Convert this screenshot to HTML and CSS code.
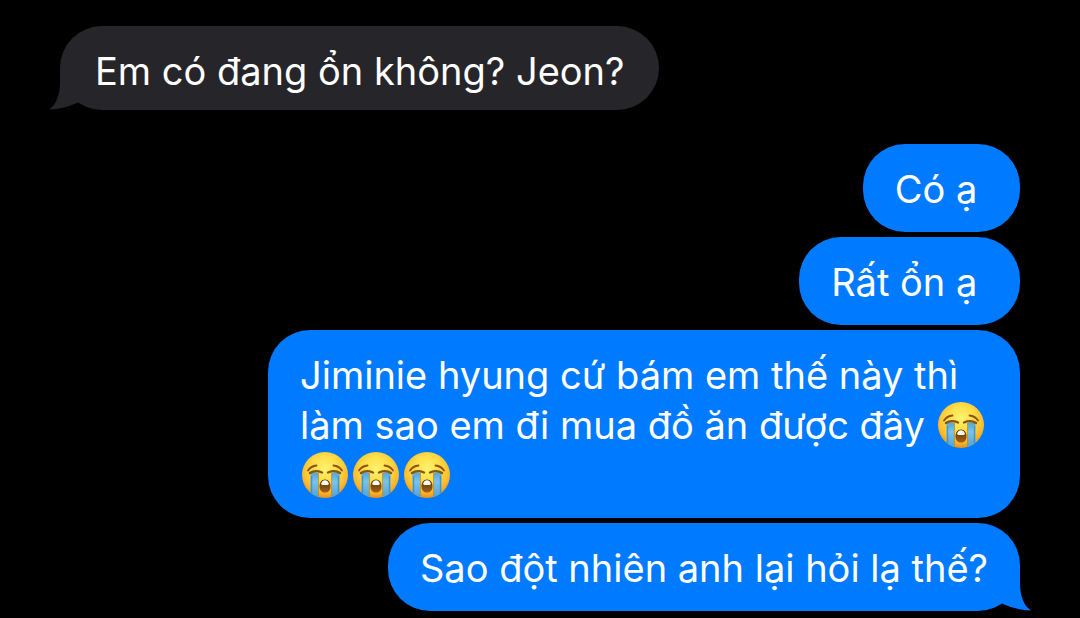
FILE: index.html
```html
<!DOCTYPE html>
<html lang="vi">
<head>
<meta charset="utf-8">
<meta name="viewport" content="width=device-width, initial-scale=1">
<title>Messages</title>
<link rel="stylesheet" href="styles.css">
</head>
<body>
<svg class="defs" aria-hidden="true">
  <defs>
    <radialGradient id="face" cx="50%" cy="36%" r="66%">
      <stop offset="0" stop-color="#fff36e"/>
      <stop offset="0.45" stop-color="#ffdc45"/>
      <stop offset="0.78" stop-color="#fbb82b"/>
      <stop offset="1" stop-color="#e08c1a"/>
    </radialGradient>
    <linearGradient id="tears" x1="0" y1="0" x2="0" y2="1">
      <stop offset="0" stop-color="#4fa6d8"/>
      <stop offset="0.35" stop-color="#7cc3e8"/>
      <stop offset="1" stop-color="#4a9fd3"/>
    </linearGradient>
    <linearGradient id="mouth" x1="0" y1="0" x2="0" y2="1">
      <stop offset="0" stop-color="#5c3208"/>
      <stop offset="1" stop-color="#a2611a"/>
    </linearGradient>
    <clipPath id="round"><circle cx="24" cy="24" r="23"/></clipPath>
    <symbol id="crying" viewBox="0 0 48 48">
      <circle cx="24" cy="24" r="23" fill="url(#face)"/>
      <g clip-path="url(#round)">
        <path d="M9.500 22Q14 20.500 17.500 22V48H9.500Z" fill="url(#tears)"/>
        <path d="M30.500 22Q34 20.500 38.500 22V48H30.500Z" fill="url(#tears)"/>
        <path d="M17.500 22V48M30.500 22V48" stroke="#c9851d" stroke-width="1" opacity="0.7"/>
        <path d="M10.500 25V48M37.500 25V48" stroke="#3583bd" stroke-width="1.500" opacity="0.7"/>
      </g>
      <g fill="none" stroke="#8b5210" stroke-linecap="round">
        <path d="M7 19.500Q10 15 15.500 14.500M41 19.500Q38 15 32.500 14.500" stroke-width="1.800"/>
        <path d="M9 22Q14 18.500 21 21.500M39 22Q34 18.500 27 21.500" stroke-width="2.400"/>
      </g>
      <path d="M24 28.500C27.500 28.500 29.500 31.500 29.500 35.500C29.500 39.500 27 41.500 24 41.500S18.500 39.500 18.500 35.500C18.500 31.500 20.500 28.500 24 28.500Z" fill="url(#mouth)"/>
      <path d="M20.300 32.300C21 30.300 22.300 29.300 24 29.300S27 30.300 27.700 32.300Q28 34 26.500 34H21.500Q20 34 20.300 32.300Z" fill="#fff"/>
    </symbol>
    <symbol id="tail" viewBox="0 0 40 42">
      <path d="M11 0V14C11 27 7 37 0 41.500C12 41 21 38 28 35L40 26V0Z" fill="currentColor"/>
    </symbol>
  </defs>
</svg>
<main class="chat">
  <p class="bubble received">Em có đang ổn không? Jeon?<svg class="tail" aria-hidden="true"><use href="#tail"/></svg></p>
  <div class="group">
    <p class="bubble sent">Có ạ&nbsp;</p>
    <p class="bubble sent">Rất ổn ạ&nbsp;</p>
    <p class="bubble sent">Jiminie hyung cứ bám em thế này thì làm sao em đi mua đồ ăn được đây <svg class="emoji" role="img" aria-label="khóc"><use href="#crying"/></svg><svg class="emoji" role="img" aria-label="khóc"><use href="#crying"/></svg><svg class="emoji" role="img" aria-label="khóc"><use href="#crying"/></svg><svg class="emoji" role="img" aria-label="khóc"><use href="#crying"/></svg></p>
    <p class="bubble sent">Sao đột nhiên anh lại hỏi lạ thế?<svg class="tail" aria-hidden="true"><use href="#tail"/></svg></p>
  </div>
</main>
</body>
</html>
```
FILE: styles.css
```css
* {
  box-sizing: border-box;
}

body {
  margin: 0;
  background: #000;
  color: #fff;
  font-family: Inter, "Liberation Sans", sans-serif;
  font-size: 38px;
  line-height: 50px;
}

.defs {
  position: absolute;
  width: 0;
  height: 0;
}

.chat {
  display: flex;
  flex-direction: column;
  gap: 34px;
  padding: 26px 60px 7px;
}

.group {
  display: flex;
  flex-direction: column;
  align-items: flex-end;
  gap: 5px;
}

.bubble {
  position: relative;
  max-width: 752px;
  margin: 0;
  border-radius: 42px;
}

.received {
  align-self: flex-start;
  padding: 20px 35px 14px;
  background: #262529;
}

.sent {
  padding: 20px 32px 18px;
  background: #007aff;
}

.tail {
  position: absolute;
  bottom: 0;
  width: 40px;
  height: 42px;
}

.received .tail {
  left: -11px;
  color: #262529;
}

.sent .tail {
  right: -11px;
  color: #007aff;
  transform: scaleX(-1);
}

.emoji {
  width: 48px;
  height: 48px;
  margin: 0 2px 0 1px;
  vertical-align: -10px;
}
```
